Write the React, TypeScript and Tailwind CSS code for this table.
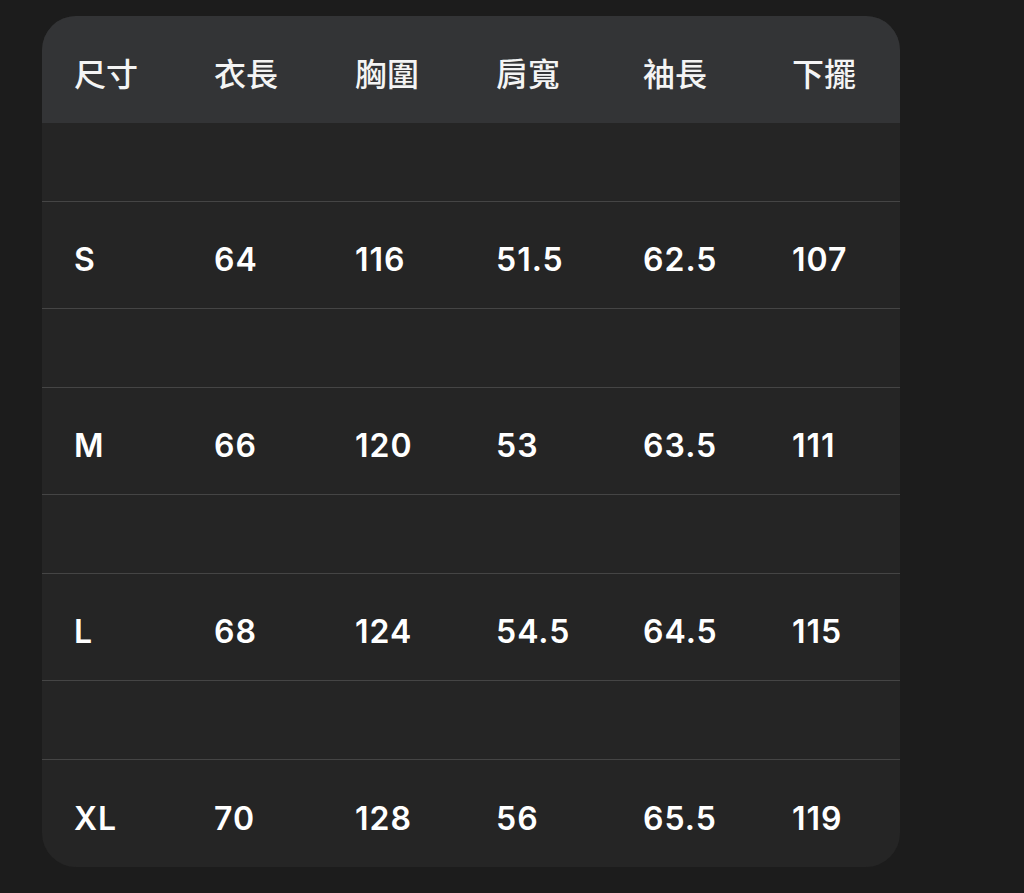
const headers = ['尺寸', '衣長', '胸圍', '肩寬', '袖長', '下擺'];

const rows = [
  ['S', '64', '116', '51.5', '62.5', '107'],
  ['M', '66', '120', '53', '63.5', '111'],
  ['L', '68', '124', '54.5', '64.5', '115'],
  ['XL', '70', '128', '56', '65.5', '119'],
];

const cols = 'grid grid-cols-[140px_141px_141px_147px_149px_1fr] items-center pl-[32px] pt-[10px]';

export default function App() {
  return (
    <div
      className="min-h-[893px] w-full bg-[#1c1c1c] pt-[16px] pl-[42px]"
      style={{ fontFamily: 'Inter, "Noto Sans CJK TC", sans-serif' }}
    >
      <div className="w-[858px] overflow-hidden rounded-[34px] bg-[#252525] text-[32px] text-white">
        {/* Header */}
        <div className={`${cols} h-[107px] bg-[#333436] font-medium text-[#f4f4f4]`}>
          {headers.map((h) => (
            <div key={h} className="leading-none">
              {h}
            </div>
          ))}
        </div>

        {rows.map((row, i) => (
          <div key={row[0]}>
            <div className="h-[79px] border-b border-[#454545]" />
            <div
              className={`${cols} h-[107px] font-semibold tracking-[1px] ${i < rows.length - 1 ? 'border-b border-[#454545]' : ''}`}
            >
              {row.map((cell, j) => (
                <div key={j} className="leading-none">
                  {cell}
                </div>
              ))}
            </div>
          </div>
        ))}
      </div>
    </div>
  );
}
